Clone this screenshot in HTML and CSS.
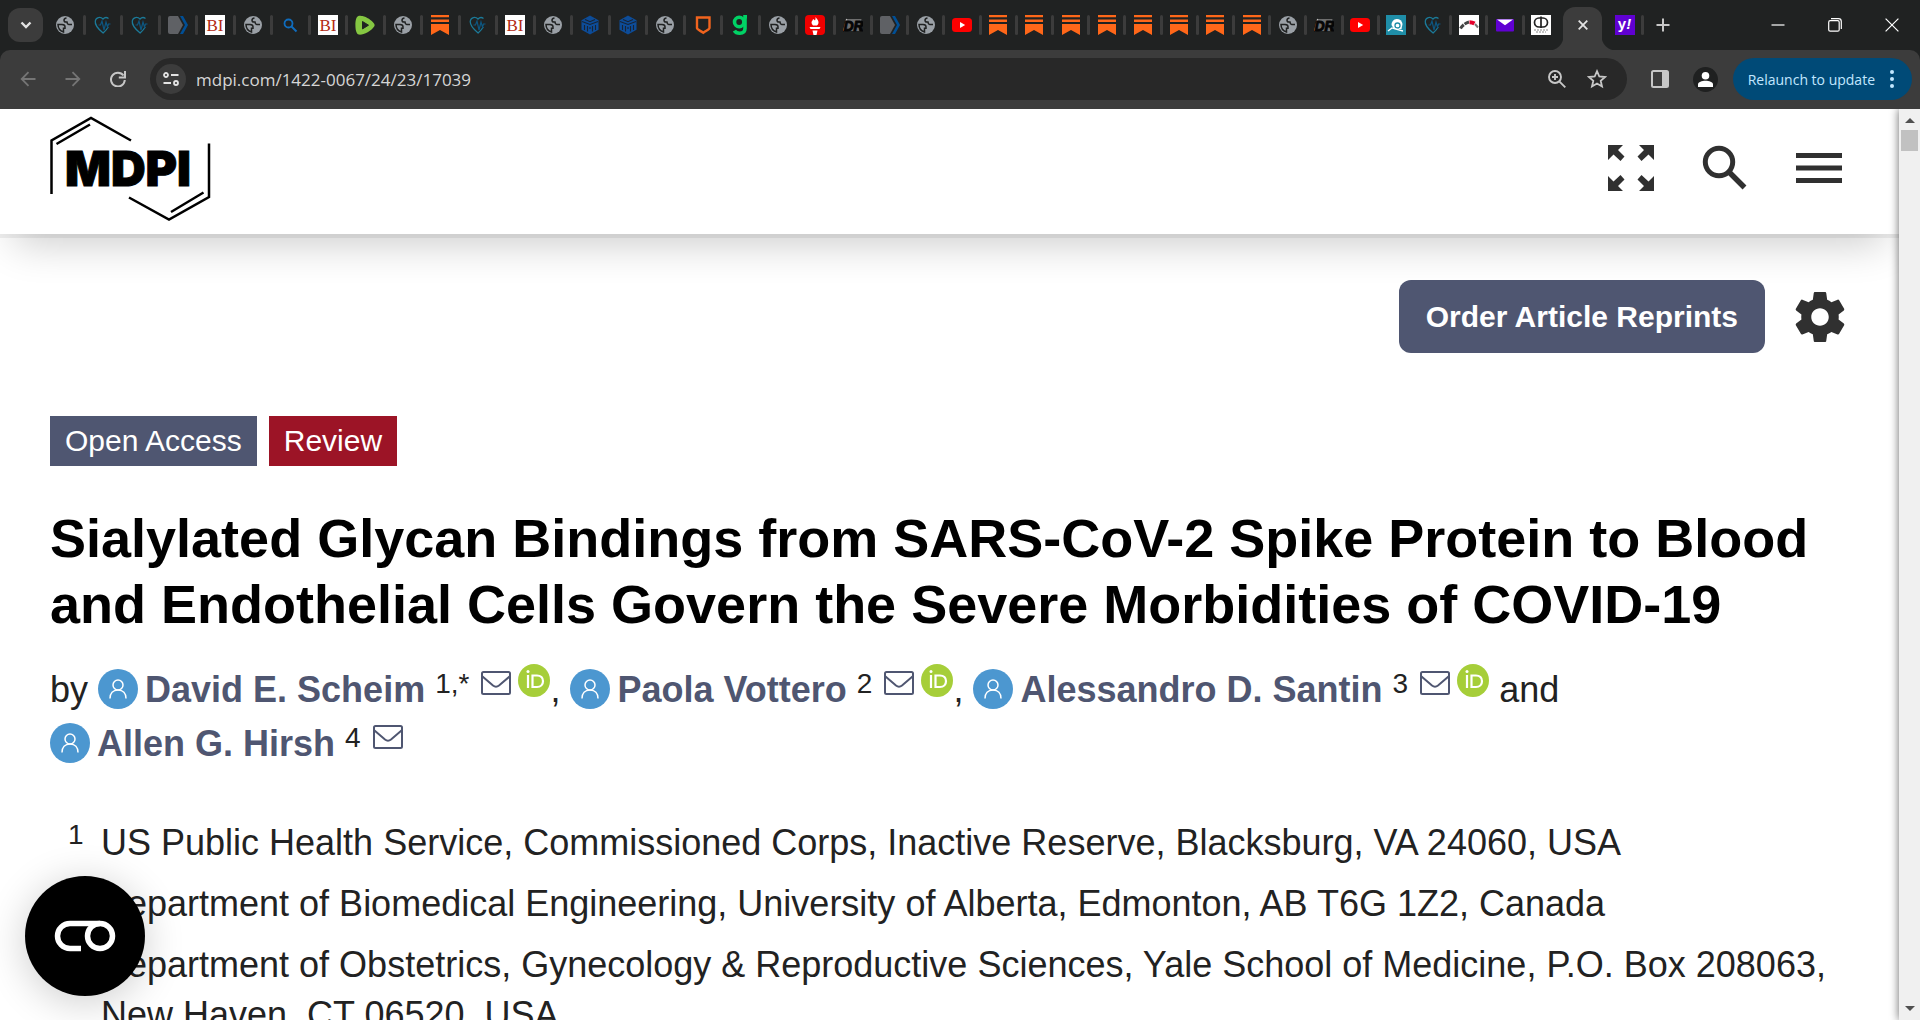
FILE: index.html
```html
<!DOCTYPE html>
<html lang="en">
<head>
  <meta charset="UTF-8" />
  <meta name="viewport" content="width=device-width, initial-scale=1.0"/>
  <title>Sialylated Glycan Bindings from SARS-CoV-2 Spike Protein</title>
  <link rel="stylesheet" href="styles.css">
</head>
<body>
  <!-- Shared icons -->
  <svg class="sprite" aria-hidden="true">
    <symbol id="globe" viewBox="0 0 20 20">
      <circle cx="10" cy="10" r="9" fill="#9aa0a6"/>
      <path d="M3 9.500h4c2 0 3 .8 3 2.300v1.400H8.500V17C5.500 16 3 13 3 9.500zM11.500 3C10 3.200 9 4 9 5.200s.8 1.800 2 1.800h1c.2 1.600.8 2.500 2 2.500h3" fill="none" stroke="#202222" stroke-width="1.500"/>
    </symbol>
    <symbol id="heart" viewBox="0 0 20 20">
      <path d="M15.500 3.500C13.500 2 11.500 2.500 10 4 7.500 1.500 3 2 2.300 6c-.7 4.500 3.500 8.500 7.800 12 2.200-2 4-4 5.200-6" fill="none" stroke="#1b7a99" stroke-width="1.300"/>
      <path d="M5.500 10h2L9 6l2 9 2-8 1.500 5 1-3h2" fill="none" stroke="#0d5680" stroke-width="1.200"/>
    </symbol>
    <symbol id="tag" viewBox="0 0 20 20">
      <path d="M0 3a2 2 0 0 1 2-2h8l5 9-5 9H2a2 2 0 0 1-2-2z" fill="#5f6165"/>
      <path d="M12 1h3l5 9-5 9h-3l5-9z" fill="#004f96"/>
    </symbol>
    <symbol id="bi" viewBox="0 0 20 20">
      <rect width="20" height="20" fill="#fff"/>
      <text x="10" y="16" font-family="Liberation Serif, serif" font-size="17" text-anchor="middle" fill="#b32a12">BI</text>
    </symbol>
    <symbol id="lens" viewBox="0 0 20 20">
      <circle cx="8.500" cy="8.500" r="4" fill="none" stroke="#0f6cbd" stroke-width="1.800"/>
      <path d="M11.500 11.500l5 5" stroke="#0f6cbd" stroke-width="2"/>
    </symbol>
    <symbol id="rumble" viewBox="0 0 20 20">
      <path d="M4 .8C8 0 16 4 19 8.500c.8 1.200.8 2.200 0 3.200C16 16 9 20 4 19.600 1 19 .4 14 .4 10S1 1.500 4 .8z" fill="#85c742"/>
      <path d="M7.500 6.500l6 3.700-6 3.700z" fill="#202222" stroke="#202222" stroke-linejoin="round"/>
    </symbol>
    <symbol id="substack" viewBox="0 0 20 20">
      <path d="M1 0h18v2.300H1zM1 4.600h18v2.300H1zM1 9h18v11l-9-5-9 5z" fill="#ff6719"/>
    </symbol>
    <symbol id="cube" viewBox="0 0 20 20">
      <path d="M10 .5l8.500 4.700v9.600L10 19.500l-8.500-4.700V5.200z" fill="#0d4c98"/>
      <path d="M2 6.500l8 3 8-3M5 4.500l5 2.200 5-2.200M4.500 10v5M7.500 11v5.500M12.500 11v5.500M15.500 10v5M10 12v2" fill="none" stroke="#182434" stroke-width="1.100"/>
    </symbol>
    <symbol id="shield" viewBox="0 0 20 20">
      <path d="M4 2.500h12.500V13c0 1.500-3 2.500-6.200 4.800C7 15.500 4 14.500 4 13z" fill="none" stroke="#f1641e" stroke-width="2.400"/>
    </symbol>
    <symbol id="gab" viewBox="0 0 20 20">
      <circle cx="9.200" cy="7" r="4.700" fill="none" stroke="#00d265" stroke-width="3.600"/>
      <path d="M15 0v13.500c0 3-2 4.700-5.200 4.700-2.400 0-4.400-.8-5.400-2.600M14 1.600h3" fill="none" stroke="#00d265" stroke-width="3.600"/>
    </symbol>
    <symbol id="torch" viewBox="0 0 20 20">
      <rect width="20" height="20" rx="4" fill="#f00000"/>
      <path d="M10.500 2c2 2.500 3 3.500 3 5.500 0 1.500-1 2.500-1.500 3h-4c-1-1-1.500-2-1.500-3C6.500 6 8 5.500 8 4c1 .5 1.500 1 2 1.500.5-1 .7-2 .5-3.500zM4.500 12h11l-1 2h-9zM7.500 15.500h5l-1 4.500h-3z" fill="#fff"/>
    </symbol>
    <symbol id="dr" viewBox="0 0 20 20">
      <path d="M4.500 4h14l-2.500 12H1z" fill="#6e6e6e"/>
      <path d="M3.800 4L.8 16" stroke="#bbb" stroke-width="1.500"/>
      <text x="10.500" y="15.500" font-family="Liberation Sans, sans-serif" font-size="14" font-weight="bold" font-style="italic" text-anchor="middle" fill="#060606" stroke="#060606" stroke-width="1">DR</text>
    </symbol>
    <symbol id="youtube" viewBox="0 0 20 20">
      <rect y="3" width="20" height="14" rx="3.500" fill="#f00"/>
      <path d="M8 7l5.200 3L8 13z" fill="#fff"/>
    </symbol>
    <symbol id="teal" viewBox="0 0 20 20">
      <rect width="20" height="20" fill="#1f8ea8"/>
      <path d="M5.500 10a5.500 5.500 0 0 1 11-1l-1 5H8z" fill="#fff"/>
      <circle cx="11.500" cy="10.500" r="2.500" fill="none" stroke="#1f8ea8" stroke-width="1.300"/>
      <path d="M2 16l4-3 3 1 8 2" fill="none" stroke="#fff" stroke-width="1.300"/>
    </symbol>
    <symbol id="gauge" viewBox="0 0 20 20">
      <rect width="20" height="20" fill="#fff"/>
      <path d="M1.500 13.500C3 11 6 8 10 7" fill="none" stroke="#444" stroke-width="3" stroke-dasharray="5 1"/>
      <path d="M10.500 7.200c2 0 3.500.4 5 1.300" fill="none" stroke="#e4002b" stroke-width="4"/>
      <path d="M16 9l3 3.500" stroke="#777" stroke-width="2"/>
    </symbol>
    <symbol id="mail" viewBox="0 0 20 20">
      <rect x="1" y="4" width="18" height="12.500" rx="1" fill="#6001d2"/>
      <path d="M2 4.500h16l-8 5.700z" fill="#fff"/>
    </symbol>
    <symbol id="crest" viewBox="0 0 20 20">
      <rect width="20" height="20" fill="#fff"/>
      <path d="M11 3H8a4.500 4.500 0 0 0 0 9h3M8.500 3H12a4.500 4.500 0 0 1 0 9H8.500M10 1.500V13" fill="none" stroke="#222" stroke-width="1.700"/>
      <path d="M3 15h14M5 17h10" stroke="#888" stroke-dasharray="2 1"/>
    </symbol>
    <symbol id="person" viewBox="0 0 40 40">
      <circle cx="20" cy="20" r="20" fill="#4c97d0"/>
      <circle cx="20" cy="16" r="5" fill="none" stroke="#fff" stroke-width="1.500"/>
      <path d="M12 29.500c0-5 3-8.500 8-8.500s8 3.500 8 8.500" fill="none" stroke="#fff" stroke-width="1.500"/>
    </symbol>
    <symbol id="envelope" viewBox="0 0 30 24">
      <rect x="1" y="1" width="28" height="22" rx="1.500" fill="none" stroke="#4f5671" stroke-width="2"/>
      <path d="M1.500 5.500L12 14.500c2 1.600 4 1.600 6 0L28.500 5.500" fill="none" stroke="#4f5671" stroke-width="2"/>
    </symbol>
    <symbol id="orcid" viewBox="0 0 32 33">
      <ellipse cx="16" cy="16.500" rx="16" ry="16.500" fill="#a6ce39"/>
      <circle cx="10" cy="7.500" r="1.500" fill="#fff"/>
      <path d="M10 11v13M14.500 11.500h4.500c3.800 0 6 2.500 6 5.700s-2.200 5.800-6 5.800h-4.500z" fill="none" stroke="#fff" stroke-width="2.200"/>
    </symbol>
  </svg>

  <!-- Browser tab strip -->
  <div class="tab-strip">
    <button class="tab-search" aria-label="Search tabs"><svg width="12" height="8" viewBox="0 0 12 8"><path d="M1.500 1.500L6 6l4.500-4.500" fill="none" stroke="#e3e3e3" stroke-width="2.400"/></svg></button>
    <div class="tabs tabs-old">
      <button class="tab"><svg><use href="#globe"/></svg></button>
      <button class="tab"><svg><use href="#heart"/></svg></button>
      <button class="tab"><svg><use href="#heart"/></svg></button>
      <button class="tab"><svg><use href="#tag"/></svg></button>
      <button class="tab"><svg><use href="#bi"/></svg></button>
      <button class="tab"><svg><use href="#globe"/></svg></button>
      <button class="tab"><svg><use href="#lens"/></svg></button>
      <button class="tab"><svg><use href="#bi"/></svg></button>
      <button class="tab"><svg><use href="#rumble"/></svg></button>
      <button class="tab"><svg><use href="#globe"/></svg></button>
      <button class="tab"><svg><use href="#substack"/></svg></button>
      <button class="tab"><svg><use href="#heart"/></svg></button>
      <button class="tab"><svg><use href="#bi"/></svg></button>
      <button class="tab"><svg><use href="#globe"/></svg></button>
      <button class="tab"><svg><use href="#cube"/></svg></button>
      <button class="tab"><svg><use href="#cube"/></svg></button>
      <button class="tab"><svg><use href="#globe"/></svg></button>
      <button class="tab"><svg><use href="#shield"/></svg></button>
      <button class="tab"><svg><use href="#gab"/></svg></button>
      <button class="tab"><svg><use href="#globe"/></svg></button>
      <button class="tab"><svg><use href="#torch"/></svg></button>
      <button class="tab"><svg><use href="#dr"/></svg></button>
    </div>
    <div class="tabs tabs-new">
      <button class="tab"><svg><use href="#tag"/></svg></button>
      <button class="tab"><svg><use href="#globe"/></svg></button>
      <button class="tab"><svg><use href="#youtube"/></svg></button>
      <button class="tab"><svg><use href="#substack"/></svg></button>
      <button class="tab"><svg><use href="#substack"/></svg></button>
      <button class="tab"><svg><use href="#substack"/></svg></button>
      <button class="tab"><svg><use href="#substack"/></svg></button>
      <button class="tab"><svg><use href="#substack"/></svg></button>
      <button class="tab"><svg><use href="#substack"/></svg></button>
      <button class="tab"><svg><use href="#substack"/></svg></button>
      <button class="tab"><svg><use href="#substack"/></svg></button>
      <button class="tab"><svg><use href="#globe"/></svg></button>
      <button class="tab"><svg><use href="#dr"/></svg></button>
      <button class="tab"><svg><use href="#youtube"/></svg></button>
      <button class="tab"><svg><use href="#teal"/></svg></button>
      <button class="tab"><svg><use href="#heart"/></svg></button>
      <button class="tab"><svg><use href="#gauge"/></svg></button>
      <button class="tab"><svg><use href="#mail"/></svg></button>
      <button class="tab last"><svg><use href="#crest"/></svg></button>
    </div>
    <button class="tab-active" aria-label="Close tab"><svg width="10" height="10" viewBox="0 0 10 10"><path d="M.7.7l8.600 8.600M9.300.7L.7 9.300" stroke="#e3e3e3" stroke-width="1.800"/></svg></button>
    <button class="tab tab-yahoo">
      <svg viewBox="0 0 20 20">
        <rect width="20" height="20" fill="#6001d2"/>
        <text x="9.500" y="14" font-family="Liberation Sans, sans-serif" font-size="15" font-weight="bold" text-anchor="middle" fill="#fff">y<tspan font-style="italic">!</tspan></text>
      </svg>
    </button>
    <button class="new-tab" aria-label="New tab"><svg width="14" height="14" viewBox="0 0 14 14"><path d="M7 .5v13M.5 7h13" stroke="#c7c7c7" stroke-width="2"/></svg></button>
    <div class="window-controls">
      <button aria-label="Minimize"><svg width="14" height="14" viewBox="0 0 14 14"><path d="M.5 7h13" stroke="#fff" stroke-width="1.200"/></svg></button>
      <button aria-label="Restore"><svg width="14" height="14" viewBox="0 0 14 14"><rect x=".7" y="2.700" width="10.500" height="10.500" rx="1.500" fill="none" stroke="#fff" stroke-width="1.200"/><path d="M3 .7h7.500a2.800 2.800 0 0 1 2.800 2.800V11" fill="none" stroke="#fff" stroke-width="1.200"/></svg></button>
      <button aria-label="Close"><svg width="14" height="14" viewBox="0 0 14 14"><path d="M.6.6l12.800 12.800M13.400.6L.6 13.400" stroke="#fff" stroke-width="1.200"/></svg></button>
    </div>
  </div>

  <!-- Browser toolbar -->
  <div class="toolbar">
    <button class="nav-btn" aria-label="Back"><svg width="16" height="16" viewBox="0 0 16 16"><path d="M15.500 8H2M8.500 1.200L1.700 8l6.800 6.800" fill="none" stroke="#757575" stroke-width="1.800"/></svg></button>
    <button class="nav-btn" aria-label="Forward"><svg width="16" height="16" viewBox="0 0 16 16"><path d="M.5 8H14M7.500 1.200L14.300 8l-6.800 6.800" fill="none" stroke="#757575" stroke-width="1.800"/></svg></button>
    <button class="nav-btn" aria-label="Reload"><svg width="16" height="16" viewBox="0 0 16 16"><path d="M13.500 4.500A6.900 6.900 0 1 0 14.800 9" fill="none" stroke="#c7c7c7" stroke-width="2"/><path d="M15 0v6.500H8.800" fill="none" stroke="#c7c7c7" stroke-width="2"/></svg></button>
    <div class="omnibox">
      <button class="site-info" aria-label="Site information"><svg width="16" height="14" viewBox="0 0 16 14"><g fill="none" stroke="#e3e3e3" stroke-width="1.800"><circle cx="3" cy="3" r="2"/><path d="M8 3h7.500M.5 11H8"/><circle cx="13" cy="11" r="2"/></g></svg></button>
      <input class="url" type="text" aria-label="Address" value="mdpi.com/1422-0067/24/23/17039">
      <button class="omni-btn" aria-label="Zoom"><svg width="20" height="20" viewBox="0 0 20 20"><g fill="none" stroke="#c7c7c7" stroke-width="1.900"><circle cx="8" cy="8" r="6"/><path d="M12.300 12.300l6 6M8 5v6M5 8h6"/></g></svg></button>
      <button class="omni-btn" aria-label="Bookmark"><svg width="20" height="20" viewBox="0 0 20 20"><path d="M10 2.200l2.300 5.300 5.800.5-4.400 3.800 1.300 5.700-5-3-5 3 1.300-5.700L1.900 8l5.800-.5z" fill="none" stroke="#c7c7c7" stroke-width="1.800"/></svg></button>
    </div>
    <button class="side-panel" aria-label="Side panel"><svg width="18" height="18" viewBox="0 0 18 18"><rect x="1" y="1" width="16" height="16" rx="1.500" fill="none" stroke="#c7c7c7" stroke-width="2"/><path d="M11 1h6v16h-6z" fill="#c7c7c7"/></svg></button>
    <button class="profile" aria-label="Profile"><svg width="15" height="15" viewBox="0 0 15 15"><circle cx="7.500" cy="3.800" r="3.800" fill="#fff"/><path d="M0 15v-2.500C0 10 4 8.800 7.500 8.800S15 10 15 12.500V15z" fill="#fff"/></svg></button>
    <button class="relaunch"><span>Relaunch to update</span><svg width="4" height="18" viewBox="0 0 4 18"><g fill="#c2e7ff"><circle cx="2" cy="2" r="2"/><circle cx="2" cy="9" r="2"/><circle cx="2" cy="16" r="2"/></g></svg></button>
  </div>

  <!-- Page -->
  <div class="viewport">
    <div class="page">
      <header class="header">
        <a href="#" class="logo" aria-label="MDPI">
          <svg width="162" height="108" viewBox="0 -2 162 108">
            <g fill="none" stroke="#000" stroke-width="2.500">
              <path d="M1.500 78V24.500L41 2l40 22.500M6.500 28L40 8.500"/>
              <path d="M159 27.500V81l-40 22.500L79 81.500M153.500 76.500L121 96"/>
            </g>
            <text x="15" y="70" font-family="Inter, sans-serif" font-size="48" font-weight="900" stroke="#000" stroke-width="1">MDPI</text>
          </svg>
        </a>
        <nav class="header-icons">
          <button aria-label="Full screen">
            <svg width="46" height="46" viewBox="0 0 46 46" fill="#303030">
              <path id="arrow" d="M0 0h15l-5 5 6.500 6.500-4 4.500L5.500 9.500 0 15z"/>
              <use href="#arrow" transform="matrix(-1 0 0 1 46 0)"/>
              <use href="#arrow" transform="matrix(1 0 0 -1 0 46)"/>
              <use href="#arrow" transform="matrix(-1 0 0 -1 46 46)"/>
            </svg>
          </button>
          <button aria-label="Search">
            <svg width="46" height="46" viewBox="0 0 46 46"><circle cx="17" cy="17" r="13.700" fill="none" stroke="#303030" stroke-width="5"/><path d="M27.500 27.500L42.500 42.500" stroke="#303030" stroke-width="5.500"/></svg>
          </button>
          <button aria-label="Menu">
            <svg width="46" height="30" viewBox="0 0 46 30"><path d="M0 0h46v5H0zM0 12.500h46v5H0zM0 25h46v5H0z" fill="#303030"/></svg>
          </button>
        </nav>
      </header>

      <main class="article">
        <div class="actions">
          <a href="#" class="reprints">Order Article Reprints</a>
          <button class="settings" aria-label="Settings">
            <svg width="50" height="50" viewBox="2 2 20 20"><path fill="#303030" d="M19.430 12.980c.04-.32.070-.64.070-.98s-.03-.66-.07-.98l2.110-1.650c.19-.15.240-.42.120-.64l-2-3.460c-.12-.22-.39-.3-.61-.22l-2.490 1c-.52-.4-1.080-.73-1.690-.98l-.38-2.650C14.460 2.180 14.250 2 14 2h-4c-.25 0-.46.18-.49.42l-.38 2.650c-.61.25-1.170.59-1.690.98l-2.490-1c-.23-.09-.49 0-.61.22l-2 3.460c-.13.22-.07.49.12.64l2.110 1.650c-.04.32-.07.65-.07.98s.03.66.07.98l-2.110 1.650c-.19.15-.24.42-.12.640l2 3.460c.12.220.39.300.61.220l2.490-1c.52.400 1.080.730 1.690.980l.38 2.650c.03.240.24.420.49.420h4c.25 0 .46-.18.490-.42l.38-2.650c.61-.25 1.170-.59 1.690-.98l2.490 1c.23.090.49 0 .61-.22l2-3.460c.12-.22.070-.49-.12-.64l-2.110-1.650zM12 15.500c-1.930 0-3.500-1.570-3.500-3.500s1.570-3.500 3.500-3.500 3.500 1.570 3.500 3.500-1.570 3.500-3.500 3.500z"/></svg>
          </button>
        </div>

        <div class="labels">
          <span class="label">Open Access</span>
          <span class="label label-type">Review</span>
        </div>

        <h1 class="title">Sialylated Glycan Bindings from SARS-CoV-2 Spike Protein to Blood and Endothelial Cells Govern the Severe Morbidities of COVID-19</h1>

        <div class="authors">
          by
          <span class="author"><svg class="person"><use href="#person"/></svg><a href="#">David E. Scheim</a> <sup>1,*</sup><svg class="envelope"><use href="#envelope"/></svg><svg class="orcid"><use href="#orcid"/></svg>,</span>
          <span class="author"><svg class="person"><use href="#person"/></svg><a href="#">Paola Vottero</a> <sup>2</sup><svg class="envelope"><use href="#envelope"/></svg><svg class="orcid"><use href="#orcid"/></svg>,</span>
          <span class="author"><svg class="person"><use href="#person"/></svg><a href="#">Alessandro D. Santin</a> <sup>3</sup><svg class="envelope"><use href="#envelope"/></svg><svg class="orcid"><use href="#orcid"/></svg></span>
          and
          <span class="author"><svg class="person"><use href="#person"/></svg><a href="#">Allen G. Hirsh</a> <sup>4</sup><svg class="envelope"><use href="#envelope"/></svg></span>
        </div>

        <ul class="affiliations">
          <li><sup>1</sup><div>US Public Health Service, Commissioned Corps, Inactive Reserve, Blacksburg, VA 24060, USA</div></li>
          <li><sup>2</sup><div>Department of Biomedical Engineering, University of Alberta, Edmonton, AB T6G 1Z2, Canada</div></li>
          <li><sup>3</sup><div>Department of Obstetrics, Gynecology &amp; Reproductive Sciences, Yale School of Medicine, P.O. Box 208063, New Haven, CT 06520, USA</div></li>
        </ul>
      </main>
    </div>

    <div class="scrollbar">
      <svg width="10" height="5" viewBox="0 0 10 5"><path d="M0 5l5-5 5 5z" fill="#505050"/></svg>
      <div class="thumb"></div>
      <svg class="down" width="10" height="5" viewBox="0 0 10 5"><path d="M0 0l5 5 5-5z" fill="#505050"/></svg>
    </div>

    <button class="cookie-btn" aria-label="Cookie settings">
      <svg width="62" height="32" viewBox="0 0 62 32"><g fill="none" stroke="#fff" stroke-width="5.500"><path d="M27 28.500H16a12.500 12.500 0 0 1 0-25h30"/><circle cx="46" cy="16" r="12.500"/></g></svg>
    </button>
  </div>
</body>
</html>
```
FILE: styles.css
```css
* {
  box-sizing: border-box;
}

body {
  margin: 0;
  height: 100vh;
  display: flex;
  flex-direction: column;
  overflow: hidden;
  font-family: "Liberation Sans", Arial, sans-serif;
  color: #222;
  background: #202222;
}

button {
  padding: 0;
  border: 0;
  background: none;
  font: inherit;
  color: inherit;
  display: flex;
  align-items: center;
  justify-content: center;
  flex-shrink: 0;
  cursor: pointer;
}

a {
  text-decoration: none;
}

.sprite {
  display: none;
}

/* Tab strip */
.tab-strip {
  display: flex;
  align-items: center;
  height: 50px;
  padding-left: 8px;
  flex-shrink: 0;
}

.tab-search {
  width: 35px;
  height: 34px;
  border-radius: 12px;
  background: #3c3c3c;
  margin-right: 5px;
}

.tabs {
  display: flex;
  min-width: 0;
}

.tabs-old {
  flex: 0 1 825px;
}

.tabs-new {
  flex: 0 1 688px;
  margin-right: 2px;
}

.tab {
  flex: 1;
  height: 34px;
  min-width: 0;
}

.tab svg {
  width: 20px;
  height: 20px;
  margin: 0 auto;
  flex-shrink: 0;
}

.tab::after {
  content: "";
  width: 3px;
  height: 20px;
  border-radius: 2px;
  background: #3c3c3c;
}

.tab.last::after {
  background: none;
}

.tab-active {
  position: relative;
  align-self: flex-end;
  width: 39px;
  height: 43px;
  padding-bottom: 7px;
  border-radius: 12px 12px 0 0;
  background: #3c3c3c;
}

.tab-active::before,
.tab-active::after {
  content: "";
  position: absolute;
  bottom: 0;
  width: 14px;
  height: 14px;
}

.tab-active::before {
  right: 100%;
  background: radial-gradient(circle at 0 0, transparent 14px, #3c3c3c 15px);
}

.tab-active::after {
  left: 100%;
  background: radial-gradient(circle at 100% 0, transparent 14px, #3c3c3c 15px);
}

.tab-yahoo {
  flex: 0 0 42px;
  padding-left: 6px;
}

.new-tab {
  width: 38px;
  height: 34px;
}

.window-controls {
  display: flex;
  margin-left: auto;
}

.window-controls button {
  width: 57px;
  height: 50px;
}

/* Toolbar */
.toolbar {
  display: flex;
  align-items: center;
  height: 59px;
  padding: 0 8px 1px 5px;
  border-radius: 10px 10px 0 0;
  background: #3c3c3c;
  flex-shrink: 0;
}

.nav-btn {
  width: 45px;
  height: 42px;
}

.omnibox {
  display: flex;
  align-items: center;
  flex: 1;
  height: 42px;
  margin-left: 10px;
  padding: 0 10px 0 6px;
  border-radius: 21px;
  background: #282828;
}

.site-info {
  width: 30px;
  height: 30px;
  border-radius: 50%;
  background: #3c3c3c;
}

.url {
  flex: 1;
  min-width: 0;
  margin-left: 10px;
  padding: 0;
  border: 0;
  outline: 0;
  background: none;
  font-family: "Open Sans", "Noto Sans", sans-serif;
  font-size: 17px;
  color: #d6d6d6;
}

.omni-btn {
  width: 40px;
  height: 40px;
}

.side-panel {
  width: 40px;
  height: 40px;
  margin-left: 13px;
}

.profile {
  width: 25px;
  height: 25px;
  margin: 0 15px 0 13px;
  border-radius: 50%;
  background: #1f2020;
}

.relaunch {
  gap: 15px;
  height: 42px;
  padding: 0 18px 0 15px;
  border-radius: 21px;
  background: #004a77;
  color: #c2e7ff;
  font-family: "Open Sans", "Noto Sans", sans-serif;
  font-size: 14px;
}

/* Page */
.viewport {
  position: relative;
  display: flex;
  flex: 1;
  min-height: 0;
  overflow: hidden;
  background: #fff;
}

.page {
  flex: 1;
  min-width: 0;
}

.header {
  display: flex;
  align-items: center;
  justify-content: space-between;
  height: 125px;
  padding: 0 57px 8px 50px;
  background: #fff;
  box-shadow: 0 4px 0 rgba(0, 0, 0, 0.06), 0 24px 40px -14px rgba(0, 0, 0, 0.2);
}

.logo {
  display: flex;
}

.header-icons {
  display: flex;
  align-items: center;
  gap: 48px;
}

.article {
  padding: 46px 50px 0;
}

.actions {
  display: flex;
  align-items: center;
  justify-content: flex-end;
  gap: 30px;
  padding-right: 4px;
}

.reprints {
  padding: 0 27px;
  border-radius: 12px;
  background: #4f5671;
  color: #fff;
  font-size: 30px;
  font-weight: bold;
  line-height: 73px;
}

.labels {
  display: flex;
  gap: 12px;
  margin-top: 63px;
}

.label {
  padding: 0 15px;
  background: #4f5671;
  color: #fff;
  font-size: 30px;
  line-height: 50px;
}

.label-type {
  background: #9c1426;
}

.title {
  margin: 39px 0 26px;
  color: #000;
  font-size: 54px;
  line-height: 66px;
}

.authors {
  font-size: 36px;
  line-height: 54px;
}

.author {
  white-space: nowrap;
}

.author a {
  color: #4f5671;
  font-weight: bold;
}

sup {
  font-size: 28px;
  line-height: 0;
  vertical-align: 9px;
}

.person {
  width: 40px;
  height: 40px;
  margin-right: 7px;
  vertical-align: -7px;
}

.envelope {
  width: 30px;
  height: 24px;
  margin-left: 12px;
  vertical-align: 7px;
}

.orcid {
  width: 32px;
  height: 33px;
  margin-left: 7px;
  vertical-align: 5px;
}

.affiliations {
  margin: 47px 0 0;
  padding: 0;
  list-style: none;
  font-size: 36px;
  line-height: 50px;
}

.affiliations li {
  display: flex;
  margin-bottom: 11px;
}

.affiliations sup {
  width: 51px;
  padding-left: 18px;
  line-height: 33px;
  flex-shrink: 0;
}

/* Scrollbar */
.scrollbar {
  display: flex;
  flex-direction: column;
  align-items: center;
  width: 21px;
  padding: 9px 0;
  background: #f0f0f0;
  box-shadow: 0 0 10px rgba(0, 0, 0, 0.6);
}

.thumb {
  width: 17px;
  height: 21px;
  margin-top: 7px;
  background: #c1c1c1;
}

.scrollbar .down {
  margin-top: auto;
}

/* Floating cookie settings button */
.cookie-btn {
  position: absolute;
  left: 25px;
  bottom: 24px;
  width: 120px;
  height: 120px;
  border-radius: 50%;
  background: #000;
  box-shadow: 0 6px 40px rgba(0, 0, 0, 0.2);
}
```
